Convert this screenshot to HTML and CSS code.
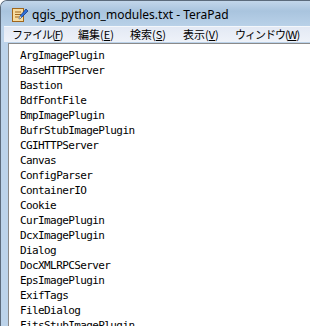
FILE: index.html
```html
<!DOCTYPE html>
<html>
<head>
    <title>qgis_python_modules.txt - TeraPad</title>
    <link rel="stylesheet" href="styles.css">
</head>
<body>
    <div class="window">
        <div class="titlebar">
            <svg class="app-icon" width="17" height="16" viewBox="0 0 17 16">
                <rect x="1.5" y="1.5" width="11" height="13" fill="#f6dca0" stroke="#a0661c"/>
                <path d="M4 5h6M4 7.5h6M4 10h4" stroke="#a0661c"/>
                <path d="M8 12l1-3 6-7 2 2-7 7z" fill="#2f6fd8" stroke="#173c88" stroke-width="0.8"/>
                <path d="M8 12l1-3 1.5 1.5z" fill="#f4e2b0"/>
            </svg>
            <span class="title">qgis_python_modules.txt - TeraPad</span>
        </div>
        <div class="menubar">
            <span class="menu-item kana">ファイル(<u>F</u>)</span>
            <span class="menu-item">編集(<u>E</u>)</span>
            <span class="menu-item">検索(<u>S</u>)</span>
            <span class="menu-item">表示(<u>V</u>)</span>
            <span class="menu-item kana">ウィンドウ(<u>W</u>)</span>
        </div>
        <div class="editor">
            <div class="line">ArgImagePlugin</div>
            <div class="line">BaseHTTPServer</div>
            <div class="line">Bastion</div>
            <div class="line">BdfFontFile</div>
            <div class="line">BmpImagePlugin</div>
            <div class="line">BufrStubImagePlugin</div>
            <div class="line">CGIHTTPServer</div>
            <div class="line">Canvas</div>
            <div class="line">ConfigParser</div>
            <div class="line">ContainerIO</div>
            <div class="line">Cookie</div>
            <div class="line">CurImagePlugin</div>
            <div class="line">DcxImagePlugin</div>
            <div class="line">Dialog</div>
            <div class="line">DocXMLRPCServer</div>
            <div class="line">EpsImagePlugin</div>
            <div class="line">ExifTags</div>
            <div class="line">FileDialog</div>
            <div class="line">FitsStubImagePlugin</div>
        </div>
    </div>
</body>
</html>
```

FILE: styles.css
```css
body {
    margin: 0;
    background-color: #ffffff;
    overflow: hidden;
}
.window {
    height: 326px;
    background-color: #bcd3ea;
    border-top: 1px solid #5c6b7c;
    border-left: 1px solid #5c6b7c;
    border-top-left-radius: 7px;
    box-sizing: border-box;
    overflow: hidden;
}
.titlebar {
    height: 25px;
    display: flex;
    align-items: center;
    padding-left: 10px;
    padding-top: 2px;
    box-sizing: border-box;
    background: linear-gradient(to bottom, #c2d6ea 0%, #a9c4de 40%, #b9d1e8 100%);
}
.app-icon {
    margin-right: 4px;
}
.title {
    font-family: "Noto Sans", "DejaVu Sans", sans-serif;
    font-size: 12px;
    color: #000000;
}
.menubar {
    height: 15px;
    margin-left: 3px;
    display: flex;
    padding-left: 8px;
    border-top: 1px solid #f4f7fb;
    background: linear-gradient(to bottom, #e3e9f4, #eef2f9);
    font-family: "Noto Sans CJK JP", sans-serif;
    font-size: 11px;
    line-height: 15px;
    color: #000000;
    white-space: nowrap;
}
.menu-item {
    flex-shrink: 0;
    width: 52px;
}
.menu-item:first-child {
    width: 66px;
}
.menu-item:nth-child(3) {
    width: 53px;
}
.kana {
    letter-spacing: -1px;
}
.editor {
    margin-left: 7px;
    margin-top: 1px;
    height: 300px;
    background-color: #ffffff;
    border-top: 1px solid #8a8a8a;
    border-left: 1px solid #8a8a8a;
    padding-top: 4px;
    padding-left: 11px;
    font-family: "DejaVu Sans Mono", monospace;
    font-size: 11px;
    letter-spacing: -0.6px;
    line-height: 15px;
    color: #000000;
}
```
